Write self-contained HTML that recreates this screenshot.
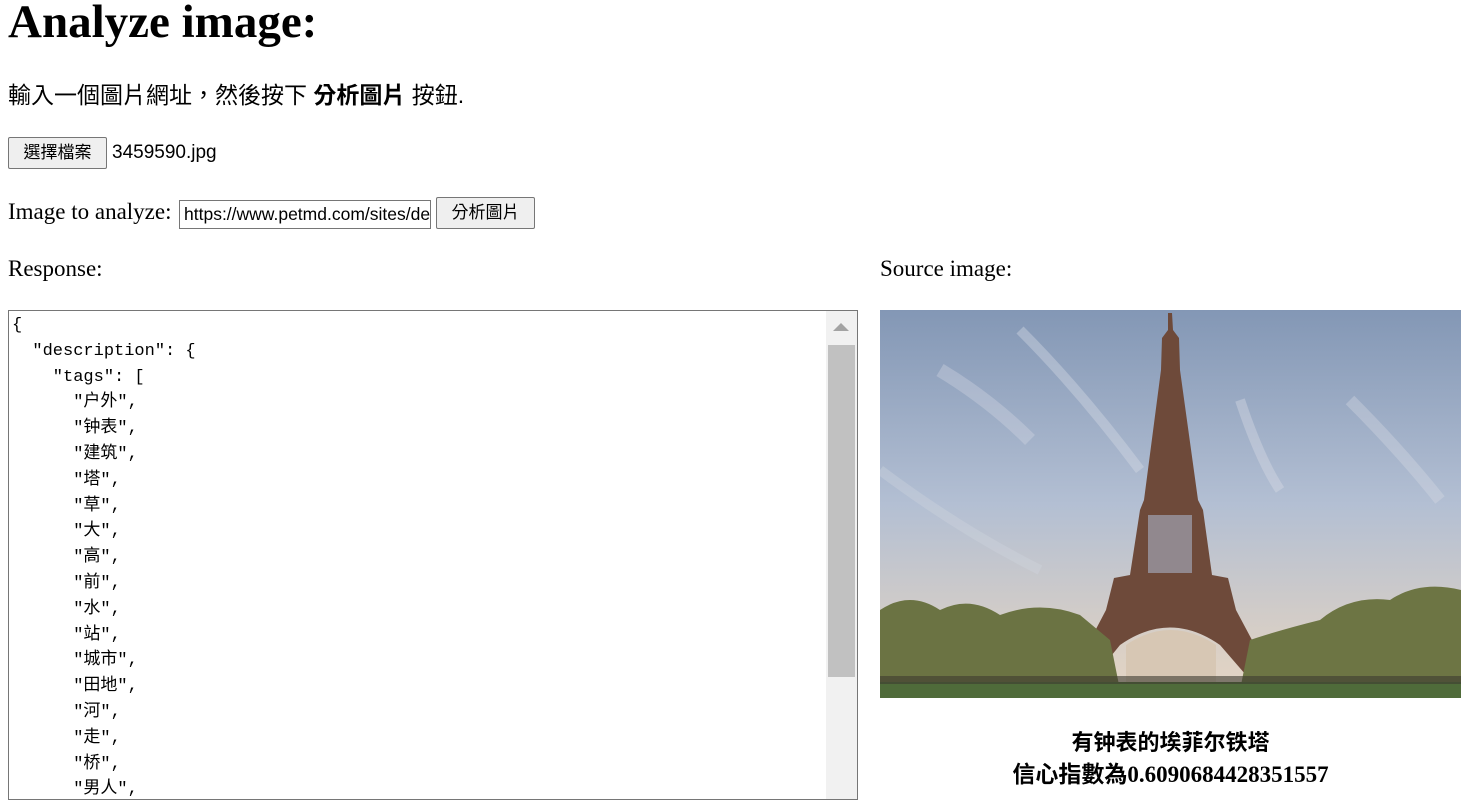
<!DOCTYPE html>
<html><head><meta charset="utf-8"><style>
body{margin:0;width:1478px;height:793px;overflow:hidden;background:#fff;font-family:"Liberation Serif","Noto Sans CJK TC",serif;color:#000;position:relative}
.a{position:absolute;white-space:nowrap}
h1{position:absolute;left:8px;top:-6px;margin:0;font-size:47px;font-weight:bold;line-height:56px}
.cjk{font-family:"Liberation Sans","Noto Sans CJK TC",sans-serif}
.btn{position:absolute;background:#efefef;border:1px solid #767676;border-radius:2px;font-family:"Liberation Sans","Noto Sans CJK TC",sans-serif;font-size:17px;color:#000;text-align:center;box-sizing:border-box}
#ta{position:absolute;left:8px;top:310px;width:850px;height:490px;border:1px solid #767676;box-sizing:border-box;overflow:hidden}
#ta pre{margin:0;padding:2px 0 0 3px;font-family:"Liberation Mono","Noto Sans CJK SC",monospace;font-size:17px;line-height:25.8px;color:#000}
.sb{position:absolute;right:0;top:0;width:31px;height:100%;background:#f1f1f1}
.th{position:absolute;left:2px;top:34px;width:27px;height:332px;background:#c1c1c1}
.ar{position:absolute;left:7px;top:12px;width:0;height:0;border-left:8px solid transparent;border-right:8px solid transparent;border-bottom:8px solid #a3a3a3}
</style></head><body>
<h1>Analyze image:</h1>
<div class="a cjk" style="left:8px;top:80px;font-size:23px;line-height:30px">輸入一個圖片網址，然後按下 <b>分析圖片</b> 按鈕.</div>
<div class="btn" style="left:8px;top:137px;width:99px;height:32px;line-height:30px">選擇檔案</div>
<div class="a cjk" style="left:112px;top:140px;font-size:19px;line-height:26px">3459590.jpg</div>
<div class="a" style="left:8px;top:198px;font-size:23px;line-height:28px">Image to analyze:</div>
<div class="a" style="left:179px;top:200px;width:252px;height:29px;border:1px solid #767676;box-sizing:border-box;overflow:hidden;font-family:'Liberation Sans',sans-serif;font-size:17.5px;line-height:27px;padding-left:4px">https://www.petmd.com/sites/default</div>
<div class="btn" style="left:436px;top:197px;width:99px;height:32px;line-height:30px">分析圖片</div>
<div class="a" style="left:8px;top:255px;font-size:23px;line-height:28px">Response:</div>
<div class="a" style="left:880px;top:255px;font-size:23px;line-height:28px">Source image:</div>
<div id="ta"><pre>{
  "description": {
    "tags": [
      "户外",
      "钟表",
      "建筑",
      "塔",
      "草",
      "大",
      "高",
      "前",
      "水",
      "站",
      "城市",
      "田地",
      "河",
      "走",
      "桥",
      "男人",</pre>
<div class="sb"><div class="ar"></div><div class="th"></div></div></div>
<svg class="a" style="left:880px;top:310px" width="581" height="388" viewBox="0 0 581 388">
<defs><linearGradient id="sky" x1="0" y1="0" x2="0" y2="1"><stop offset="0" stop-color="#8397b5"/><stop offset="0.5" stop-color="#b3bfd3"/><stop offset="0.85" stop-color="#d8cfc6"/><stop offset="1" stop-color="#e6d6c4"/></linearGradient></defs>
<rect width="581" height="388" fill="url(#sky)"/>
<path d="M140 20 Q200 80 260 160" stroke="#d8dce6" stroke-width="10" fill="none" opacity="0.4"/>
<path d="M60 60 Q110 90 150 130" stroke="#d6dae4" stroke-width="14" fill="none" opacity="0.35"/>
<path d="M360 90 Q380 150 400 180" stroke="#d9dde6" stroke-width="10" fill="none" opacity="0.4"/>
<path d="M470 90 Q520 140 560 190" stroke="#d9dde6" stroke-width="12" fill="none" opacity="0.35"/>
<path d="M0 160 Q80 220 160 260" stroke="#d0d6e0" stroke-width="10" fill="none" opacity="0.35"/>
<path d="M288 3 L292 3 L293 20 L299 28 L300 60 L318 190 L323 200 L332 265 L348 268 L356 300 L380 345 L394 372 L372 372 L340 335 Q290 300 240 335 L210 372 L187 372 L205 340 L226 300 L234 268 L250 265 L260 200 L264 190 L281 60 L282 28 L288 20 Z" fill="#6e4a3a"/>
<path d="M246 335 Q290 305 336 335 L336 372 L246 372 Z" fill="#d7c7b4"/>
<rect x="268" y="205" width="44" height="58" fill="#a8b3c6" opacity="0.6"/>
<path d="M0 300 Q30 280 60 300 Q90 285 120 305 Q160 290 200 305 L230 330 L240 380 L0 380 Z" fill="#6b7343"/>
<path d="M581 280 Q540 270 510 290 Q470 285 440 310 Q400 320 370 330 L360 380 L581 380 Z" fill="#6d7544"/>
<rect x="0" y="372" width="581" height="16" fill="#4f6b3a"/>
<rect x="0" y="366" width="581" height="8" fill="#3e3a30" opacity="0.6"/>
</svg>
<div class="a cjk" style="left:880px;width:581px;text-align:center;top:729px;font-size:22px;font-weight:bold;line-height:28px">有钟表的埃菲尔铁塔</div>
<div class="a" style="left:880px;width:581px;text-align:center;top:761px;font-size:23px;font-weight:bold;line-height:28px;font-family:'Liberation Serif','Noto Sans CJK TC',serif">信心指數為0.6090684428351557</div>
</body></html>
